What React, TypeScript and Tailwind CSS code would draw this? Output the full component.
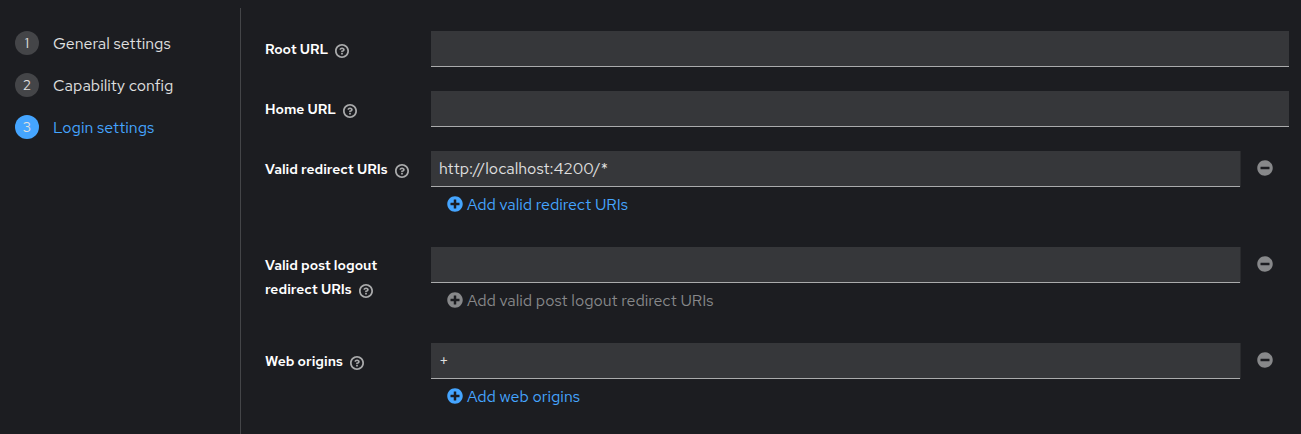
import { useState } from "react";
import { FaMinusCircle, FaPlusCircle } from "react-icons/fa";

const steps = ["General settings", "Capability config", "Login settings"];
const inputStyle =
  "block h-9 min-w-0 flex-1 rounded-none border-b border-[#aaabac] bg-[#36373a] px-2 text-base leading-6 text-[#e0e0e0] outline-none";

function HelpIcon() {
  return (
    <svg viewBox="0 0 1024 1024" fill="currentColor" aria-hidden="true" className="size-3.5">
      <path d="M521.3 576C627.5 576 713.7 502 713.7 413.7S627.6 253.6 521.3 253.6C366 253.6 334.5 337.7 329.2 407.2C329.2 414.3 335.2 416 343.5 416H445C450.5 416 458 415.5 460.8 406.5C460.8 362.6 582.9 357.1 582.9 413.6C582.9 441.9 556.2 470.9 521.3 473S447.3 479.8 447.3 521.7V553.8C447.3 570.8 456.1 576 472 576ZM575.3 751.3V655.3A16 16 0 0 0 559.3 639.3H463.3A16 16 0 0 0 447.3 655.3V751.3A16 16 0 0 0 463.3 767.3H559.3A16 16 0 0 0 575.3 751.3ZM512 896C300.2 896 128 723.9 128 512C128 300.3 300.2 128 512 128S896 300.2 896 512S723.7 896 512 896M512 0C229.7 0 0 229.8 0 512S229.8 1024 512 1024S1024 794.3 1024 512S794.4 0 512 0" />
    </svg>
  );
}

function FieldLabel({ id, text }: { id: string; text: string }) {
  return (
    <div className="w-[150px] shrink-0 pt-1.5 text-sm leading-6 font-semibold text-white">
      <label htmlFor={id}>{text}</label>
      <button type="button" aria-label={`Help for ${text}`} className="ml-[7px] pt-px align-middle text-[#aaabac]">
        <HelpIcon />
      </button>
    </div>
  );
}

function TextField({ id, label }: { id: string; label: string }) {
  const [value, setValue] = useState("");
  return (
    <div className="flex gap-4">
      <FieldLabel id={id} text={label} />
      <input id={id} type="text" value={value} onChange={(e) => setValue(e.target.value)} className={inputStyle} />
    </div>
  );
}

function ListField({ id, label, initial, action }: { id: string; label: string; initial: string; action: string }) {
  const [value, setValue] = useState(initial);
  return (
    <div className="flex gap-4">
      <FieldLabel id={id} text={label} />
      <div className="min-w-0 flex-1">
        <div className="flex">
          <input id={id} type="text" value={value} onChange={(e) => setValue(e.target.value)} className={inputStyle} />
          <button type="button" disabled aria-label="Remove" className="flex h-9 items-center border-l border-[#2a2b2e] px-4 pb-0.5 text-[#87888a]">
            <FaMinusCircle className="size-4" />
          </button>
        </div>
        <button
          type="button"
          disabled={value === ""}
          className="flex h-9 items-center gap-1 px-4 text-base leading-6 text-[#45a5ff] disabled:text-[#87888a]"
        >
          <FaPlusCircle className="mb-0.5 size-4" />
          {action}
        </button>
      </div>
    </div>
  );
}

export default function App() {
  return (
    <div className="flex min-h-screen bg-[#1c1d21] pt-2 font-['Red_Hat_Text','Lato',sans-serif]">
      <nav aria-label="Steps" className="w-[241px] shrink-0 border-r border-[#444548] px-[15px] pt-[23px]">
        <ol className="flex flex-col gap-4">
          {steps.map((step, i) => (
            <li key={step}>
              <button
                type="button"
                aria-current={i === 2 ? "step" : undefined}
                className="group flex items-start gap-3.5 text-base leading-[26px] text-[#e0e0e0] aria-[current=step]:text-[#45a5ff]"
              >
                <span className="flex size-6 items-center justify-center rounded-full bg-[#444548] text-sm text-[#e0e0e0] group-aria-[current=step]:bg-[#45a5ff]">
                  {i + 1}
                </span>
                {step}
              </button>
            </li>
          ))}
        </ol>
      </nav>
      <form className="flex min-w-0 flex-1 flex-col gap-6 pt-[23px] pr-3 pl-6">
        <TextField id="root-url" label="Root URL" />
        <TextField id="home-url" label="Home URL" />
        <ListField id="redirect" label="Valid redirect URIs" initial="http://localhost:4200/*" action="Add valid redirect URIs" />
        <ListField id="logout" label="Valid post logout redirect URIs" initial="" action="Add valid post logout redirect URIs" />
        <ListField id="origins" label="Web origins" initial="+" action="Add web origins" />
      </form>
    </div>
  );
}
